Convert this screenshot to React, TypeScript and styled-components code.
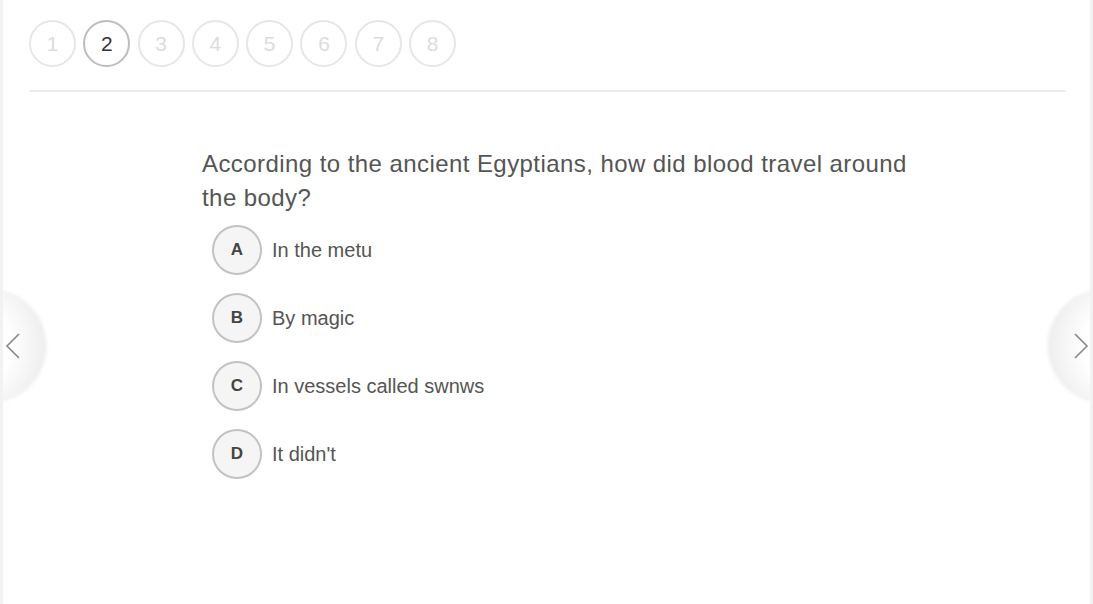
import React from "react";
import styled, { createGlobalStyle } from "styled-components";

const Global = createGlobalStyle`
  html, body { margin: 0; padding: 0; background: #fff; }
  body { font-family: "Liberation Sans", Arial, sans-serif; }
  * { box-sizing: border-box; }
`;

const Frame = styled.div`
  position: relative;
  width: 1093px;
  height: 604px;
  overflow: hidden;
  border-left: 3px solid #f2f2f2;
  border-right: 3px solid #f2f2f2;
  background: #fff;
`;

const Inner = styled.div`
  position: relative;
  height: 100%;
  overflow: hidden;
`;

const Steps = styled.div`
  display: flex;
  gap: 7.3px;
  padding: 20px 0 0 26px;
`;

const Step = styled.div<{ $active?: boolean }>`
  width: 47px;
  height: 47px;
  border-radius: 50%;
  border: 2px solid ${(p) => (p.$active ? "#bdbdbd" : "#e6e6e6")};
  color: ${(p) => (p.$active ? "#333" : "#dcdcdc")};
  font-size: 21px;
  display: flex;
  align-items: center;
  justify-content: center;
  background: #fff;
`;

const Divider = styled.div`
  margin: 23px 24px 0 26px;
  height: 2px;
  background: #ececec;
`;

const Content = styled.div`
  padding: 55px 0 0 199px;
  width: 940px;
`;

const Question = styled.h2`
  margin: 0;
  font-weight: normal;
  font-size: 24px;
  line-height: 34px;
  letter-spacing: 0.43px;
  color: #555;
  max-width: 730px;
`;

const Options = styled.div`
  display: flex;
  flex-direction: column;
  gap: 18px;
  margin-top: 10px;
  padding-left: 10px;
`;

const Option = styled.div`
  display: flex;
  align-items: center;
  gap: 10px;
`;

const Letter = styled.div`
  width: 50px;
  height: 50px;
  border-radius: 50%;
  border: 2px solid #c2c2c2;
  background: #f5f5f5;
  color: #444;
  font-weight: bold;
  font-size: 17px;
  display: flex;
  align-items: center;
  justify-content: center;
`;

const OptionText = styled.span`
  font-size: 20px;
  color: #555;
`;

const Arrow = styled.div<{ $side: "left" | "right" }>`
  position: absolute;
  top: 291px;
  ${(p) => (p.$side === "left" ? "left: -68px;" : "right: -69px;")}
  width: 110px;
  height: 110px;
  border-radius: 50%;
  background: radial-gradient(
    circle at ${(p) => (p.$side === "left" ? "30%" : "70%")} 50%,
    #ffffff 45%,
    #e6e6e6 100%
  );
  box-shadow: 0 0 5px rgba(0, 0, 0, 0.12);
  display: flex;
  align-items: center;
  justify-content: ${(p) => (p.$side === "left" ? "flex-end" : "flex-start")};
  padding: 0 24px;
`;

const Chevron = ({ dir }: { dir: "left" | "right" }) => (
  <svg width="16" height="26" viewBox="0 0 16 26">
    <path
      d={dir === "left" ? "M14 1 L2 13 L14 25" : "M2 1 L14 13 L2 25"}
      fill="none"
      stroke="#888"
      strokeWidth="1.6"
    />
  </svg>
);

const options = [
  { k: "A", t: "In the metu" },
  { k: "B", t: "By magic" },
  { k: "C", t: "In vessels called swnws" },
  { k: "D", t: "It didn't" },
];

export default function App() {
  return (
    <>
      <Global />
      <Frame>
        <Inner>
          <Steps>
            {[1, 2, 3, 4, 5, 6, 7, 8].map((n) => (
              <Step key={n} $active={n === 2}>
                {n}
              </Step>
            ))}
          </Steps>
          <Divider />
          <Content>
            <Question>
              According to the ancient Egyptians, how did blood travel around the body?
            </Question>
            <Options>
              {options.map((o) => (
                <Option key={o.k}>
                  <Letter>{o.k}</Letter>
                  <OptionText>{o.t}</OptionText>
                </Option>
              ))}
            </Options>
          </Content>
          <Arrow $side="left">
            <Chevron dir="left" />
          </Arrow>
          <Arrow $side="right">
            <Chevron dir="right" />
          </Arrow>
        </Inner>
      </Frame>
    </>
  );
}
